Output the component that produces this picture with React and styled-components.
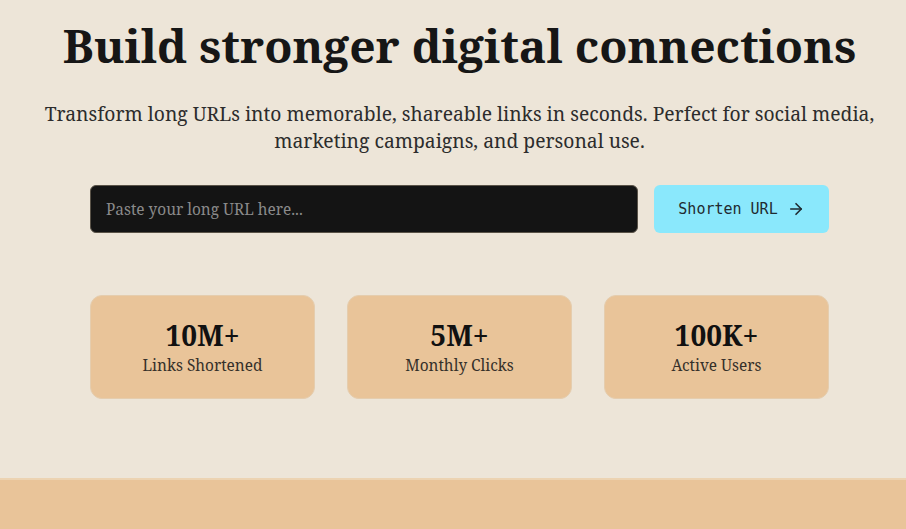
import React from "react";
import styled, { createGlobalStyle } from "styled-components";
import { ArrowRight } from "lucide-react";

const GlobalStyle = createGlobalStyle`
  html, body {
    margin: 0;
    padding: 0;
    background: #ede5d8;
  }
  body {
    font-family: "Noto Serif", "DejaVu Serif", serif;
    color: #1a1a1a;
  }
`;

const Page = styled.div`
  min-height: 529px;
  display: flex;
  flex-direction: column;
`;

const Hero = styled.section`
  padding: 14px 0 0 13px;
  height: 464px;
  display: flex;
  flex-direction: column;
  align-items: center;
`;

const Title = styled.h1`
  margin: 0;
  font-size: 46.2px;
  font-weight: 700;
  line-height: 64px;
  color: #161616;
  white-space: nowrap;
`;

const Subtitle = styled.p`
  margin: 22px 0 0;
  max-width: 840px;
  text-align: center;
  font-size: 19.3px;
  line-height: 27px;
  color: #2c2c2c;
`;

const Form = styled.form`
  margin-top: 31px;
  display: flex;
  gap: 16px;
  width: 739px;
`;

const UrlInput = styled.input`
  flex: 1;
  height: 48px;
  box-sizing: border-box;
  background: #141414;
  border: 1px solid #5a5348;
  border-radius: 6px;
  padding: 0 15px;
  font-family: "Noto Serif", "DejaVu Serif", serif;
  font-size: 15.4px;
  color: #eee;
  outline: none;

  &::placeholder {
    color: #8a8a8a;
  }
`;

const SubmitButton = styled.button`
  width: 175px;
  height: 48px;
  border: none;
  border-radius: 6px;
  background: #8ae8fc;
  color: #1f2a30;
  font-family: "DejaVu Sans Mono", "Liberation Mono", monospace;
  font-size: 15px;
  display: flex;
  align-items: center;
  justify-content: center;
  gap: 9px;
  cursor: pointer;
`;

const Stats = styled.div`
  margin-top: 62px;
  display: grid;
  grid-template-columns: repeat(3, 225px);
  gap: 32px;
`;

const StatCard = styled.div`
  height: 104px;
  box-sizing: border-box;
  border-radius: 12px;
  background: #e9c499;
  border: 1px solid #e5cdae;
  display: flex;
  flex-direction: column;
  align-items: center;
  justify-content: center;
  gap: 5px;
  padding-top: 2px;
`;

const StatValue = styled.div`
  font-size: 28px;
  font-weight: 700;
  line-height: 30px;
  color: #111;
`;

const StatLabel = styled.div`
  font-size: 15.4px;
  line-height: 22px;
  color: #35302a;
`;

const Band = styled.footer`
  flex: 1;
  background: #e9c499;
  border-top: 2px solid #ecd3b2;
  min-height: 50px;
`;

const stats = [
  { value: "10M+", label: "Links Shortened" },
  { value: "5M+", label: "Monthly Clicks" },
  { value: "100K+", label: "Active Users" },
];

export default function App() {
  return (
    <Page>
      <GlobalStyle />
      <Hero>
        <Title>Build stronger digital connections</Title>
        <Subtitle>
          Transform long URLs into memorable, shareable links in seconds. Perfect for social media,
          marketing campaigns, and personal use.
        </Subtitle>
        <Form onSubmit={(e) => e.preventDefault()}>
          <UrlInput placeholder="Paste your long URL here..." />
          <SubmitButton type="submit">
            Shorten URL <ArrowRight size={18} strokeWidth={2.2} />
          </SubmitButton>
        </Form>
        <Stats>
          {stats.map((s) => (
            <StatCard key={s.label}>
              <StatValue>{s.value}</StatValue>
              <StatLabel>{s.label}</StatLabel>
            </StatCard>
          ))}
        </Stats>
      </Hero>
      <Band />
    </Page>
  );
}
